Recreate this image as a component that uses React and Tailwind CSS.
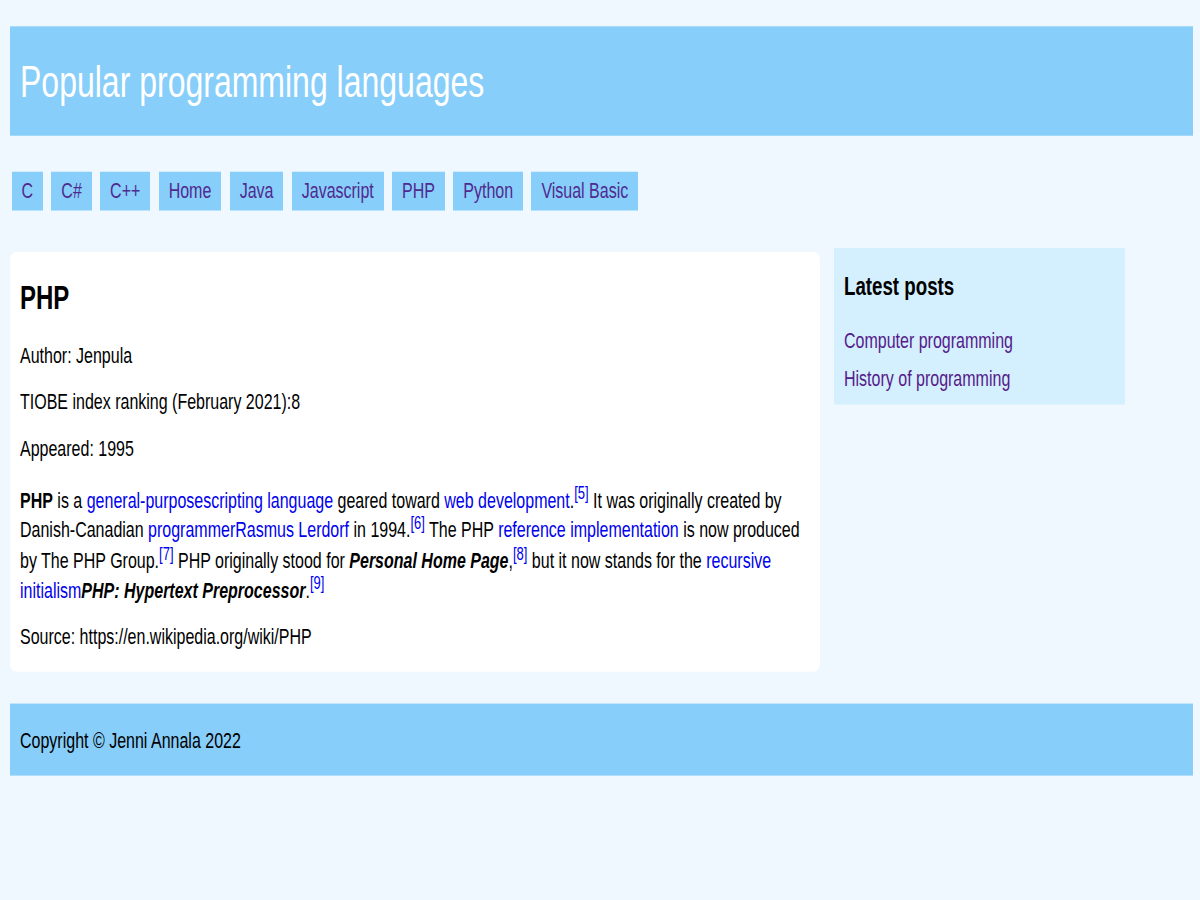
export default function App() {
  const navItems = ["C", "C#", "C++", "Home", "Java", "Javascript", "PHP", "Python", "Visual Basic"];
  const link = "text-[#0000ee]";
  return (
    <div className="h-[900px] w-[1200px] overflow-hidden bg-[#f0f8ff] font-['Liberation_Sans',Arial,sans-serif] text-black">
      <div className="origin-top scale-y-[1.385] pl-[10px] pt-[18.8px]">
        <header className="w-[1183px] bg-[#87cefa] pl-[10px] pt-[22px] pb-[20.6px]">
          <h1 className="text-[32px] font-normal leading-[36.8px] text-white">Popular programming languages</h1>
        </header>

        <nav className="mt-[26px] flex gap-[8.3px] pl-[1.5px]">
          {navItems.map((n) => (
            <a key={n} href="#" className="bg-[#87cefa] px-[10px] py-[4.5px] text-[16px] leading-[18.4px] text-[#4f2a8f]">
              {n}
            </a>
          ))}
        </nav>

        <div className="mt-[27.5px] flex items-start gap-[14px]">
          <main className="mt-[2.9px] w-[810px] rounded-[6px] bg-white px-[10px] pt-[19px] pb-[15.6px] text-[16px] leading-[18.4px]">
            <h2 className="text-[24px] font-bold leading-[27.6px]">PHP</h2>
            <p className="mt-[19px]">Author: Jenpula</p>
            <p className="mt-[15.3px]">TIOBE index ranking (February 2021):8</p>
            <p className="mt-[15.1px]">Appeared: 1995</p>
            <p className="mt-[17.5px] leading-[21.7px]">
              <b>PHP</b> is a <a href="#" className={link}>general-purpose</a><a href="#" className={link}>scripting language</a> geared toward{" "}
              <a href="#" className={link}>web development</a>.<sup className={`${link} text-[13px]`}>[5]</sup> It was originally created by
              Danish-Canadian <a href="#" className={link}>programmer</a><a href="#" className={link}>Rasmus Lerdorf</a> in 1994.
              <sup className={`${link} text-[13px]`}>[6]</sup> The PHP <a href="#" className={link}>reference implementation</a> is now produced by
              The PHP Group.<sup className={`${link} text-[13px]`}>[7]</sup> PHP originally stood for <b><i>Personal Home Page</i></b>,
              <sup className={`${link} text-[13px]`}>[8]</sup> but it now stands for the <a href="#" className={link}>recursive initialism</a>
              <b><i>PHP: Hypertext Preprocessor</i></b>.<sup className={`${link} text-[13px]`}>[9]</sup>
            </p>
            <p className="mt-[13.8px]">Source: https://en.wikipedia.org/wiki/PHP</p>
          </main>

          <aside className="w-[291px] bg-[#d4effd] px-[10px] pt-[17px] pb-[9.4px] text-[16px] leading-[18.4px]">
            <h3 className="text-[18.72px] font-bold leading-[21.5px]">Latest posts</h3>
            <ul className="mt-[19.5px] flex flex-col gap-[9.1px]">
              <li><a href="#" className="text-[#551a8b]">Computer programming</a></li>
              <li><a href="#" className="text-[#551a8b]">History of programming</a></li>
            </ul>
          </aside>
        </div>

        <footer className="mt-[23.1px] w-[1183px] bg-[#87cefa] px-[10px] pt-[17.3px] pb-[16.3px] text-[16px] leading-[18.4px]">
          <p>Copyright © Jenni Annala 2022</p>
        </footer>
      </div>
    </div>
  );
}
